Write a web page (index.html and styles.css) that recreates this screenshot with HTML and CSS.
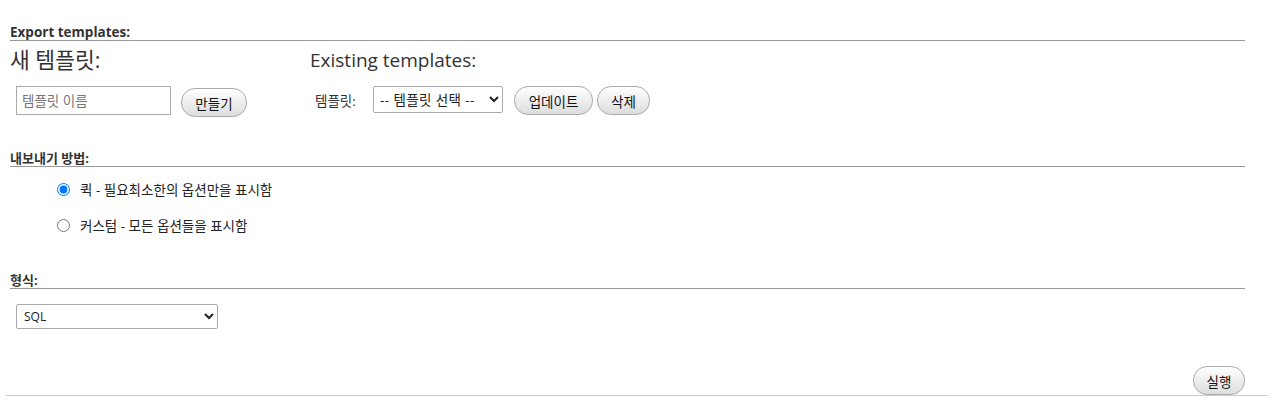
FILE: index.html
```html
<!DOCTYPE html>
<html lang="ko">
<head>
<meta charset="utf-8">
<title>Export</title>
<link rel="stylesheet" href="styles.css">
</head>
<body>
<div class="page">
  <h3 class="legend legend-first">Export templates:</h3>
  <div class="templates">
    <div class="tcol tcol-new">
      <h2 class="ttitle ttitle-ko">새 템플릿:</h2>
      <div class="trow">
        <input class="tinput" type="text" placeholder="템플릿 이름">
        <button class="btn btn-make">만들기</button>
      </div>
    </div>
    <div class="tcol tcol-exist">
      <h2 class="ttitle">Existing templates:</h2>
      <div class="trow trow-exist">
        <label class="tlabel">템플릿:</label>
        <select class="tselect"><option>-- 템플릿 선택 --</option></select>
        <button class="btn btn-update">업데이트</button>
        <button class="btn btn-delete">삭제</button>
      </div>
    </div>
  </div>

  <h3 class="legend legend-method">내보내기 방법:</h3>
  <ul class="radios">
    <li class="ritem"><input type="radio" name="m" checked class="radio"><span>퀵 - 필요최소한의 옵션만을 표시함</span></li>
    <li class="ritem"><input type="radio" name="m" class="radio"><span>커스텀 - 모든 옵션들을 표시함</span></li>
  </ul>

  <h3 class="legend legend-format">형식:</h3>
  <div class="fmt"><select class="fselect"><option>SQL</option></select></div>

  <div class="footer">
    <button class="btn btn-go">실행</button>
  </div>
</div>
</body>
</html>
```

FILE: styles.css
```css
* { box-sizing: border-box; }
html, body { margin: 0; padding: 0; background: #fff; }
body {
  font-family: "Open Sans", "Noto Sans CJK KR", sans-serif;
  font-size: 13px;
  color: #222;
}
.page { padding-top: 24px; }
.legend {
  margin: 0 30px 0 10px;
  font-size: 13px;
  font-weight: bold;
  line-height: 16px;
  color: #333;
  border-bottom: 1px solid #999;
  padding-bottom: 0;
}
.legend-first { font-size: 13.5px; }
.templates { display: flex; margin-left: 10px; }
.tcol-new { width: 300px; }
.ttitle {
  margin: 6px 0 0 0;
  font-size: 19px;
  font-weight: normal;
  line-height: 26px;
  color: #333;
}
.ttitle-ko { font-size: 21.5px; }
.trow { display: flex; align-items: center; margin-top: 11px; }
.tinput {
  margin-left: 6px;
  width: 155px;
  height: 29px;
  border: 1px solid #aaa;
  padding: 0 5px;
  font: 13.5px "Open Sans", "Noto Sans CJK KR", sans-serif;
  color: #333;
}
.tinput::placeholder { color: #777; }
.btn {
  font: 13.5px "Open Sans", "Noto Sans CJK KR", sans-serif;
  color: #111;
  border: 1px solid #aaa;
  border-radius: 14px;
  background: linear-gradient(#fff, #ddd);
  height: 29px;
  padding: 0 8px;
}
.btn-make { margin-left: 10px; width: 66px; margin-top: 4px; }
.tlabel { margin-left: 5px; width: 58px; color: #333; font-size: 13.5px; }
.tselect {
  width: 130px;
  height: 27px;
  border: 1px solid #aaa;
  border-radius: 2px;
  background: #fff;
  font: 13.5px "Open Sans", "Noto Sans CJK KR", sans-serif;
  letter-spacing: 0.4px;
  color: #222;
  padding: 0 2px;
}
.btn-update { margin-left: 11px; width: 79px; margin-top: 2px; }
.btn-delete { margin-left: 4px; width: 53px; margin-top: 2px; }
.legend-method { margin-top: 33px; }
.radios { list-style: none; margin: 0; padding: 0 0 0 57px; }
.ritem { display: flex; align-items: center; height: 36px; color: #222; font-size: 13.5px; }
.ritem:first-child { margin-top: 4px; }
.radio { width: 13px; height: 13px; margin: 0 10px 0 0; }
.legend-format { margin-top: 29px; }
.fmt { margin: 15px 0 0 16px; }
.fselect {
  width: 202px;
  height: 25px;
  border: 1px solid #aaa;
  border-radius: 2px;
  background: #fff;
  font: 12px "Open Sans", "Noto Sans CJK KR", sans-serif;
  color: #222;
  padding: 0 3px;
}
.footer {
  margin: 37px 7px 0 6px;
  border-bottom: 1px solid #ccc;
  display: flex;
  justify-content: flex-end;
  padding-right: 23px;
}
.btn-go { width: 52px; height: 29px; padding: 0; }
```
